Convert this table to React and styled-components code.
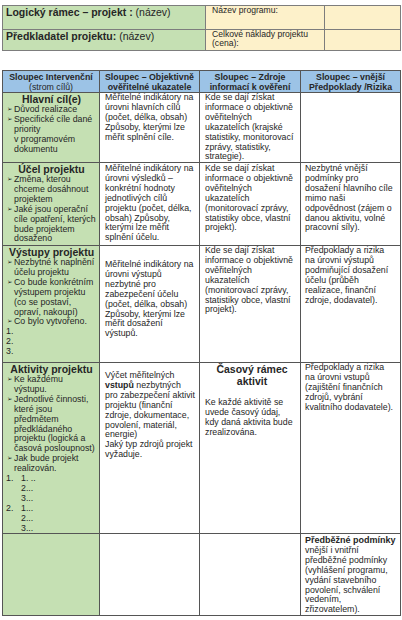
import React from "react";
import styled, { createGlobalStyle } from "styled-components";

const GlobalStyle = createGlobalStyle`
  html, body {
    margin: 0;
    padding: 0;
    background: #ffffff;
  }
  body {
    font-family: "Liberation Sans", Arial, sans-serif;
    color: #262626;
  }
`;

const LH = "9.9px";

const Page = styled.div`
  width: 402px;
  height: 620px;
  box-sizing: border-box;
  padding: 5px 0 0 2px;
  display: flex;
  flex-direction: column;
  gap: 19px;
`;

const InfoTable = styled.div`
  width: 399px;
  box-sizing: border-box;
  display: grid;
  grid-template-columns: 202px 118px 1fr;
  grid-template-rows: 23px 20px;
  gap: 1px;
  padding: 1px;
  background: #7d7d7d;
`;

const InfoCell = styled.div`
  background: ${(p) => (p.$tone === "green" ? "#c5e0b3" : "#fdf1ca")};
  overflow: hidden;
`;

const Title = styled.div`
  font-size: 10.5px;
  line-height: 12px;
  padding: 0 3px;
  white-space: nowrap;
`;

const Label = styled.div`
  font-size: 8.6px;
  line-height: 9px;
  padding: 0 6px;
  white-space: pre-line;
`;

const Frame = styled.div`
  width: 399px;
  box-sizing: border-box;
  display: grid;
  grid-template-columns: 96px 99px 100px 1fr;
  grid-template-rows: 21px 69px 82px 116px 170px 81px;
  gap: 1px;
  padding: 1px;
  background: #555555;
`;

const Head = styled.div`
  background: #9cc3e6;
  display: flex;
  flex-direction: column;
  justify-content: center;
  text-align: center;
  font-size: 8.8px;
  line-height: 10px;
  font-weight: bold;
  white-space: pre-line;
  overflow: hidden;
`;

const Light = styled.span`
  font-weight: normal;
`;

const Goal = styled.div`
  background: #c5e0b3;
  padding: 0 1px 0 2px;
  overflow: hidden;
`;

const Cell = styled.div`
  background: #ffffff;
  padding: ${(p) => p.$pt || 0}px 1px 0 ${(p) => p.$pl || 5}px;
  overflow: hidden;
`;

const Heading = styled.div`
  font-size: 10.5px;
  line-height: 12px;
  font-weight: bold;
  text-align: center;
  white-space: pre-line;
  margin-bottom: ${(p) => p.$mb || 0}px;
`;

const Bullets = styled.ul`
  list-style: none;
  margin: 0;
  padding: 0;
`;

const Bullet = styled.li`
  display: flex;
  font-size: 8.8px;
  line-height: ${LH};
  white-space: pre-line;
`;

const Marker = styled.span`
  flex: none;
  width: 9px;
  padding-left: 2px;
  box-sizing: border-box;
  font-family: "DejaVu Sans", sans-serif;
  font-size: 6.5px;
  line-height: ${LH};
`;

const Numbered = styled.div`
  display: flex;
  font-size: 8.8px;
  line-height: ${LH};
`;

const Num = styled.span`
  flex: none;
  width: 16px;
  padding-left: 1px;
  box-sizing: border-box;
`;

const Sub = styled.div`
  white-space: pre-line;
`;

const Para = styled.p`
  margin: 0;
  font-size: 8.8px;
  line-height: ${LH};
  white-space: pre-line;
`;

const Lead = styled.div`
  font-size: 9px;
  line-height: ${LH};
  font-weight: bold;
`;

function BulletList({ items }) {
  return (
    <Bullets>
      {items.map((t, i) => (
        <Bullet key={i}>
          <Marker>➢</Marker>
          <span>{t}</span>
        </Bullet>
      ))}
    </Bullets>
  );
}

function NumberList({ items }) {
  return (
    <div>
      {items.map((it, i) => (
        <Numbered key={i}>
          <Num>{it.n}</Num>
          <Sub>{(it.subs || []).join("\n")}</Sub>
        </Numbered>
      ))}
    </div>
  );
}

const sourcesText =
  "Kde se dají získat\ninformace o objektivně\nověřitelných\nukazatelích\n(monitorovací zprávy,\nstatistiky obce, vlastní\nprojekt).";

export default function App() {
  return (
    <>
      <GlobalStyle />
      <Page>
        <InfoTable>
          <InfoCell $tone="green">
            <Title>
              <b>Logický rámec – projekt :</b> (název)
            </Title>
          </InfoCell>
          <InfoCell>
            <Label>Název programu:</Label>
          </InfoCell>
          <InfoCell />
          <InfoCell $tone="green">
            <Title>
              <b>Předkladatel projektu:</b> (název)
            </Title>
          </InfoCell>
          <InfoCell>
            <Label>{"Celkové náklady projektu\n(cena):"}</Label>
          </InfoCell>
          <InfoCell />
        </InfoTable>

        <Frame>
          {/* header row */}
          <Head>
            <span>Sloupec Intervenční</span>
            <Light>(strom cílů)</Light>
          </Head>
          <Head>{"Sloupec – Objektivně\nověřitelné ukazatele"}</Head>
          <Head>{"Sloupec – Zdroje\ninformací k ověření"}</Head>
          <Head>{"Sloupec – vnější\nPředpoklady /Rizika"}</Head>

          {/* hlavní cíl */}
          <Goal>
            <Heading>Hlavní cíl(e)</Heading>
            <BulletList
              items={[
                "Důvod realizace",
                "Specifické cíle dané\npriority\nv programovém\ndokumentu",
              ]}
            />
          </Goal>
          <Cell>
            <Para>
              {"Měřitelné indikátory na\núrovni hlavních cílů\n(počet, délka, obsah)\nZpůsoby, kterými lze\nměřit splnění cíle."}
            </Para>
          </Cell>
          <Cell>
            <Para>
              {"Kde se dají získat\ninformace o objektivně\nověřitelných\nukazatelích (krajské\nstatistiky, monitorovací\nzprávy, statistiky,\nstrategie)."}
            </Para>
          </Cell>
          <Cell $pl={4} />

          {/* účel */}
          <Goal>
            <Heading>Účel projektu</Heading>
            <BulletList
              items={[
                "Změna, kterou\nchceme dosáhnout\nprojektem",
                "Jaké jsou operační\ncíle opatření, kterých\nbude projektem\ndosaženo",
              ]}
            />
          </Goal>
          <Cell $pt={1}>
            <Para>
              {"Měřitelné indikátory na\núrovni výsledků –\nkonkrétní hodnoty\njednotlivých cílů\nprojektu (počet, délka,\nobsah) Způsoby,\nkterými lze měřit\nsplnění účelu."}
            </Para>
          </Cell>
          <Cell $pt={1}>
            <Para>{sourcesText}</Para>
          </Cell>
          <Cell $pt={1} $pl={4}>
            <Para>
              {"Nezbytné vnější\npodmínky pro\ndosažení hlavního cíle\nmimo naši\nodpovědnost (zájem o\ndanou aktivitu, volné\npracovní síly)."}
            </Para>
          </Cell>

          {/* výstupy */}
          <Goal>
            <Heading>Výstupy projektu</Heading>
            <BulletList
              items={[
                "Nezbytné k naplnění\núčelu projektu",
                "Co bude konkrétním\nvýstupem projektu\n(co se postaví,\nopraví, nakoupí)",
                "Co bylo vytvořeno.",
              ]}
            />
            <NumberList items={[{ n: "1." }, { n: "2." }, { n: "3." }]} />
          </Goal>
          <Cell $pt={14}>
            <Para>
              {"Měřitelné indikátory na\núrovni výstupů\nnezbytné pro\nzabezpečení účelu\n(počet, délka, obsah)\nZpůsoby, kterými lze\nměřit dosažení\nvýstupů."}
            </Para>
          </Cell>
          <Cell>
            <Para>{sourcesText}</Para>
          </Cell>
          <Cell $pl={4}>
            <Para>
              {"Předpoklady a rizika\nna úrovni výstupů\npodmiňující dosažení\núčelu (průběh\nrealizace, finanční\nzdroje, dodavatel)."}
            </Para>
          </Cell>

          {/* aktivity */}
          <Goal>
            <Heading>Aktivity projektu</Heading>
            <BulletList
              items={[
                "Ke každému\nvýstupu.",
                "Jednotlivé činnosti,\nkteré jsou\npředmětem\npředkládaného\nprojektu (logická a\nčasová posloupnost)",
                "Jak bude projekt\nrealizován.",
              ]}
            />
            <NumberList
              items={[
                { n: "1.", subs: ["1. ..", "2...", "3..."] },
                { n: "2.", subs: ["1...", "2...", "3..."] },
              ]}
            />
          </Goal>
          <Cell $pt={8}>
            <Para>
              {"Výčet měřitelných\n"}
              <b>vstupů</b>
              {" nezbytných\npro zabezpečení aktivit\nprojektu (finanční\nzdroje, dokumentace,\npovolení, materiál,\nenergie)\nJaký typ zdrojů projekt\nvyžaduje."}
            </Para>
          </Cell>
          <Cell>
            <Heading $mb={11}>{"Časový rámec\naktivit"}</Heading>
            <Para>
              {"Ke každé aktivitě se\nuvede časový údaj,\nkdy daná aktivita bude\nzrealizována."}
            </Para>
          </Cell>
          <Cell $pl={4}>
            <Para>
              {"Předpoklady a rizika\nna úrovni vstupů\n(zajištění finančních\nzdrojů, vybrání\nkvalitního dodavatele)."}
            </Para>
          </Cell>

          {/* předběžné podmínky */}
          <Goal />
          <Cell />
          <Cell />
          <Cell $pt={2} $pl={4}>
            <Lead>Předběžné podmínky</Lead>
            <Para>
              {"vnější i vnitřní\npředběžné podmínky\n(vyhlášení programu,\nvydání stavebního\npovolení, schválení\nvedením,\nzřizovatelem)."}
            </Para>
          </Cell>
        </Frame>
      </Page>
    </>
  );
}
